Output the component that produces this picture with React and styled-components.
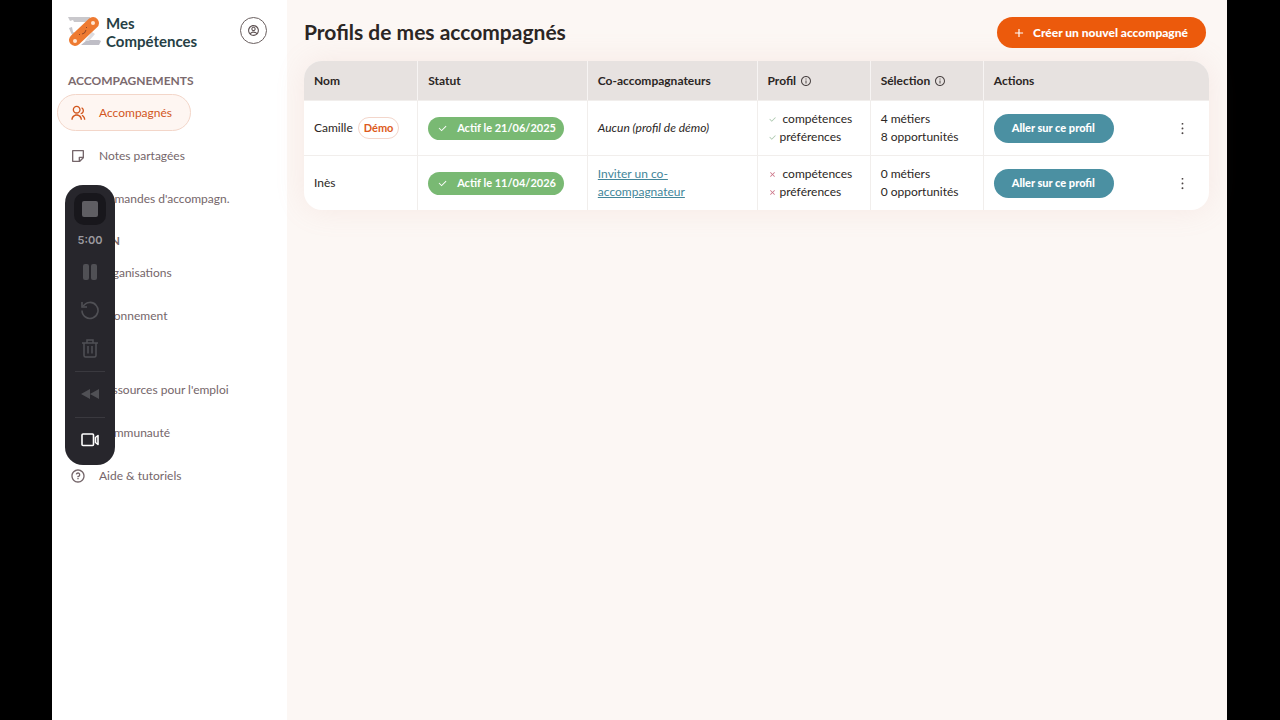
import React from "react";
import styled, { createGlobalStyle } from "styled-components";
import {
  RiAccountCircleLine,
  RiAddLine,
  RiBankCardLine,
  RiBookOpenLine,
  RiBuildingLine,
  RiCheckLine,
  RiCloseLine,
  RiDiscussLine,
  RiGroupLine,
  RiInboxLine,
  RiInformationLine,
  RiMore2Line,
  RiQuestionLine,
  RiStickyNoteLine,
} from "react-icons/ri";

const GlobalStyle = createGlobalStyle`
  * {
    box-sizing: border-box;
  }
  body {
    margin: 0;
    background: #000000;
    color: #2b2624;
    font-family: Lato, "Open Sans", sans-serif;
    font-size: 12px;
    line-height: 18px;
  }
  button {
    font-family: inherit;
    font-size: inherit;
    line-height: inherit;
    cursor: pointer;
  }
  svg {
    flex-shrink: 0;
  }
`;

const Page = styled.div`
  display: flex;
  min-height: 100vh;
  margin: 0 53px 0 52px;
  background: #fcf7f4;
`;

const Sidebar = styled.aside`
  flex: 0 0 235px;
  background: #ffffff;
`;

const Brand = styled.div`
  display: flex;
  align-items: flex-start;
  padding: 14px 20px 0 16px;
  height: 68px;
`;

const BrandLink = styled.a`
  display: flex;
  gap: 5px;
  flex: 1;
  color: #263f45;
  font-size: 15px;
  font-weight: 700;
  text-decoration: none;
`;

const AccountButton = styled.button`
  display: flex;
  align-items: center;
  justify-content: center;
  width: 27px;
  height: 27px;
  margin-top: 3px;
  padding: 0;
  border: 1px solid #6a5f5f;
  border-radius: 50%;
  background: #ffffff;
  color: #5d5152;
`;

const NavTitle = styled.h2`
  margin: 11px 0 0;
  padding-left: 16px;
  color: #7b6a6e;
  font-size: 12px;
  font-weight: 700;
  line-height: 26px;

  &:first-child {
    margin-top: 0;
  }
`;

const NavList = styled.ul`
  display: flex;
  flex-direction: column;
  align-items: flex-start;
  gap: 6px;
  margin: 0;
  padding: 0 0 0 5px;
  list-style: none;
`;

const NavLink = styled.a`
  display: flex;
  align-items: center;
  gap: 13px;
  height: 37px;
  padding: 0 18px 0 12px;
  border: 1px solid ${({ $active }) => ($active ? "#f3d6c9" : "transparent")};
  border-radius: 19px;
  background: ${({ $active }) => ($active ? "#fef6f2" : "transparent")};
  color: ${({ $active }) => ($active ? "#d2571e" : "#75666a")};
  text-decoration: none;
  white-space: nowrap;
`;

const Main = styled.main`
  flex: 1;
  min-width: 0;
  padding: 17px 18px 40px 17px;
`;

const Header = styled.header`
  display: flex;
  justify-content: space-between;
  align-items: flex-start;
  padding-right: 3px;
  margin-bottom: 13px;
`;

const Title = styled.h1`
  margin: 0;
  font-size: 21px;
  font-weight: 700;
  line-height: 29px;
`;

const CreateButton = styled.button`
  display: flex;
  align-items: center;
  gap: 7px;
  height: 31px;
  padding: 0 18px 0 15px;
  border: none;
  border-radius: 16px;
  background: #ec5a0c;
  color: #ffffff;
  font-weight: 900;
`;

const TableCard = styled.div`
  overflow: hidden;
  border-radius: 18px;
  background: #ffffff;
  box-shadow: 0 0 30px rgba(214, 150, 140, 0.14);
`;

const Table = styled.table`
  width: 100%;
  table-layout: fixed;
  border-collapse: separate;
  border-spacing: 0;
`;

const Th = styled.th`
  width: ${({ $width }) => $width};
  height: 39px;
  padding: 0 10px;
  border-left: 1px solid #f7f4f3;
  background: #e7e2e0;
  font-weight: 700;
  text-align: left;

  &:first-child {
    border-left: none;
  }

  svg {
    margin-left: 4px;
    color: #4d4646;
    vertical-align: -2px;
  }
`;

const Td = styled.td`
  height: 55px;
  padding: 0 10px;
  border-left: 1px solid #f1eeec;
  border-top: 1px solid #f1eeec;

  &:first-child {
    border-left: none;
  }
`;

const NameCell = styled.div`
  display: flex;
  align-items: center;
  gap: 5px;
`;

const DemoTag = styled.span`
  padding: 1px 5px;
  border: 1px solid #f3d6cb;
  border-radius: 11px;
  color: #dd5a20;
  font-size: 11px;
  font-weight: 700;
`;

const Status = styled.span`
  display: inline-flex;
  align-items: center;
  gap: 9px;
  height: 23px;
  padding: 0 8px 0 9px;
  border-radius: 12px;
  background: #79b973;
  color: #ffffff;
  font-size: 11px;
  font-weight: 700;
  white-space: nowrap;
`;

const InviteLink = styled.a`
  color: #43869a;
`;

const CheckLine = styled.div`
  display: flex;
  align-items: center;
  gap: ${({ $gap }) => $gap};

  svg {
    color: ${({ $done }) => ($done ? "#a3c2a6" : "#cc7588")};
  }
`;

const Actions = styled.div`
  display: flex;
  align-items: center;
  justify-content: space-between;
  padding-right: 9px;
`;

const ProfileButton = styled.button`
  height: 29px;
  padding: 0 19px 0 18px;
  border: none;
  border-radius: 15px;
  background: #4b90a2;
  color: #ffffff;
  font-size: 11px;
  font-weight: 900;
`;

const MoreButton = styled.button`
  display: flex;
  padding: 0;
  border: none;
  background: none;
  color: #4d4646;
`;

const Recorder = styled.div`
  position: fixed;
  top: 185px;
  left: 65px;
  display: flex;
  flex-direction: column;
  align-items: center;
  width: 50px;
  padding: 8px 0 6px;
  border-radius: 18px;
  background: #27262c;
`;

const StopButton = styled.button`
  display: flex;
  align-items: center;
  justify-content: center;
  width: 32px;
  height: 32px;
  padding: 0;
  border: none;
  border-radius: 10px;
  background: #18171c;
  color: #5f5e63;
`;

const Timer = styled.span`
  margin: 6px 0 4px;
  color: #9b9a9f;
  font-family: Inter, sans-serif;
  font-size: 11px;
  font-weight: 600;
`;

const ToolButton = styled.button`
  display: flex;
  align-items: center;
  justify-content: center;
  width: 32px;
  height: 38px;
  padding: 0;
  border: none;
  background: none;
  color: ${({ $bright }) => ($bright ? "#ffffff" : "#505055")};
`;

const Divider = styled.hr`
  width: 30px;
  height: 1px;
  margin: 4px 0 3px;
  border: none;
  background: #3a393f;
`;

function Logo() {
  return (
    <svg width="33" height="34" viewBox="0 0 33 34" aria-hidden="true">
      <path d="M0 3h22v5H6L5 6 2 7z" fill="#c9c8cc" />
      <path d="M1 14l3-1 1 5 5 2-3 5-4-6z" fill="#c5c4c9" />
      <path d="M13 31l6-5h12l2 1-2 4z" fill="#bfbec6" />
      <path d="M17 27l7-9 3 2-6 7z" fill="#dddce0" />
      <line x1="7" y1="26" x2="25" y2="9" stroke="#ee7a31" strokeWidth="12" strokeLinecap="round" />
      <circle cx="25" cy="9" r="2" fill="#ffe6d3" />
      <circle cx="7" cy="27" r="2" fill="#ffe6d3" />
      <path d="M11 20l1 1M18 13l1 1M14 20q3 0 4-4" fill="none" stroke="#8f4424" strokeWidth="1" />
    </svg>
  );
}

const menu = [
  {
    title: "ACCOMPAGNEMENTS",
    links: [
      { label: "Accompagnés", icon: RiGroupLine, active: true },
      { label: "Notes partagées", icon: RiStickyNoteLine },
      { label: "Demandes d'accompagn.", icon: RiInboxLine },
    ],
  },
  {
    title: "GESTION",
    links: [
      { label: "Organisations", icon: RiBuildingLine },
      { label: "Abonnement", icon: RiBankCardLine },
    ],
  },
  {
    title: "AIDE",
    links: [
      { label: "Ressources pour l'emploi", icon: RiBookOpenLine },
      { label: "Communauté", icon: RiDiscussLine },
      { label: "Aide & tutoriels", icon: RiQuestionLine },
    ],
  },
];

const profiles = [
  { name: "Camille", demo: true, date: "21/06/2025", done: true, jobs: 4, offers: 8 },
  { name: "Inès", demo: false, date: "11/04/2026", done: false, jobs: 0, offers: 0 },
];

function SideMenu() {
  return (
    <Sidebar>
      <Brand>
        <BrandLink href="#">
          <Logo />
          <span>
            Mes
            <br />
            Compétences
          </span>
        </BrandLink>
        <AccountButton aria-label="Mon compte">
          <RiAccountCircleLine size={13} />
        </AccountButton>
      </Brand>
      <nav>
        {menu.map((group) => (
          <React.Fragment key={group.title}>
            <NavTitle>{group.title}</NavTitle>
            <NavList>
              {group.links.map(({ label, icon: Icon, active }) => (
                <li key={label}>
                  <NavLink href="#" $active={active}>
                    <Icon size={16} />
                    {label}
                  </NavLink>
                </li>
              ))}
            </NavList>
          </React.Fragment>
        ))}
      </nav>
    </Sidebar>
  );
}

function ProfileRow({ profile }) {
  const Mark = profile.done ? RiCheckLine : RiCloseLine;

  return (
    <tr>
      <Td>
        <NameCell>
          {profile.name}
          {profile.demo && <DemoTag>Démo</DemoTag>}
        </NameCell>
      </Td>
      <Td>
        <Status>
          <RiCheckLine size={11} />
          Actif le {profile.date}
        </Status>
      </Td>
      <Td>
        {profile.demo ? (
          <em>Aucun (profil de démo)</em>
        ) : (
          <InviteLink href="#">Inviter un co-accompagnateur</InviteLink>
        )}
      </Td>
      <Td>
        <CheckLine $done={profile.done} $gap="6px">
          <Mark size={9} />
          compétences
        </CheckLine>
        <CheckLine $done={profile.done} $gap="3px">
          <Mark size={9} />
          préférences
        </CheckLine>
      </Td>
      <Td>
        {profile.jobs} métiers
        <br />
        {profile.offers} opportunités
      </Td>
      <Td>
        <Actions>
          <ProfileButton>Aller sur ce profil</ProfileButton>
          <MoreButton aria-label="Plus d'actions">
            <RiMore2Line size={15} />
          </MoreButton>
        </Actions>
      </Td>
    </tr>
  );
}

function RecorderBar() {
  return (
    <Recorder>
      <StopButton aria-label="Arrêter">
        <svg width="16" height="16">
          <rect width="16" height="16" rx="2" fill="currentColor" />
        </svg>
      </StopButton>
      <Timer>5:00</Timer>
      <ToolButton aria-label="Pause">
        <svg width="14" height="16" fill="currentColor">
          <rect x="0" width="6" height="16" rx="2" />
          <rect x="8" width="6" height="16" rx="2" />
        </svg>
      </ToolButton>
      <ToolButton aria-label="Recommencer">
        <svg width="20" height="20" viewBox="0 0 20 20" fill="none" stroke="currentColor" strokeWidth="1.6">
          <path d="M3.2 6.2A8 8 0 1 1 2 10.5" />
          <path d="M2 2v5h5" />
        </svg>
      </ToolButton>
      <ToolButton aria-label="Supprimer">
        <svg width="16" height="19" viewBox="0 0 16 19" fill="none" stroke="currentColor" strokeWidth="1.5">
          <path d="M0 4h16M5 4V1h6v3M2 4v12.500q0 1.500 1.500 1.500h9q1.500 0 1.500-1.500V4M6 7v7.500M10 7v7.500" />
        </svg>
      </ToolButton>
      <Divider />
      <ToolButton aria-label="Revenir en arrière">
        <svg width="18" height="12" viewBox="0 0 18 12" fill="currentColor">
          <path d="M0 6L9 1v10zM9 6l9-5v10z" />
        </svg>
      </ToolButton>
      <Divider />
      <ToolButton aria-label="Caméra" $bright>
        <svg width="18" height="14" viewBox="0 0 18 14" fill="none" stroke="currentColor" strokeWidth="1.6" strokeLinejoin="round">
          <rect x="1" y="1" width="11.500" height="11.500" rx="1" />
          <path d="M17 2.500v9l-2.500-2v-5z" />
        </svg>
      </ToolButton>
    </Recorder>
  );
}

export default function App() {
  return (
    <>
      <GlobalStyle />
      <Page>
        <SideMenu />
        <Main>
          <Header>
            <Title>Profils de mes accompagnés</Title>
            <CreateButton>
              <RiAddLine size={14} />
              Créer un nouvel accompagné
            </CreateButton>
          </Header>
          <TableCard>
            <Table>
              <thead>
                <tr>
                  <Th $width="12.5%">Nom</Th>
                  <Th $width="18.75%">Statut</Th>
                  <Th $width="18.75%">Co-accompagnateurs</Th>
                  <Th $width="12.5%">
                    Profil
                    <RiInformationLine size={12} />
                  </Th>
                  <Th $width="12.5%">
                    Sélection
                    <RiInformationLine size={12} />
                  </Th>
                  <Th $width="25%">Actions</Th>
                </tr>
              </thead>
              <tbody>
                {profiles.map((profile) => (
                  <ProfileRow key={profile.name} profile={profile} />
                ))}
              </tbody>
            </Table>
          </TableCard>
        </Main>
      </Page>
      <RecorderBar />
    </>
  );
}
